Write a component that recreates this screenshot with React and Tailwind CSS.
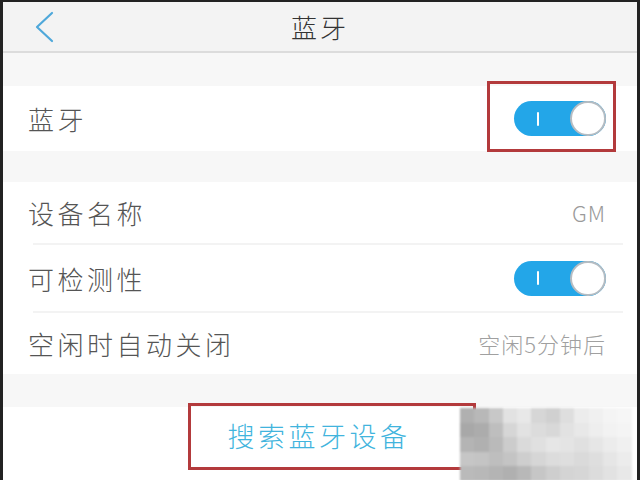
import React from 'react';

const font = { fontFamily: '"Noto Sans CJK SC", "Noto Sans", sans-serif' };

// 马赛克水印的灰度块
const mosaic = [
  [176, 184, 200, 226, 232, 214, 208, 222, 236, 240, 244, 246],
  [168, 172, 190, 214, 226, 220, 216, 226, 232, 238, 242, 244],
  [180, 176, 186, 204, 218, 224, 230, 228, 224, 230, 236, 240],
  [198, 196, 190, 196, 206, 214, 220, 222, 218, 222, 230, 236],
  [186, 184, 180, 176, 184, 198, 206, 212, 214, 220, 226, 232],
];

const Toggle = () => (
  <div className="relative w-[92px] h-[35px] rounded-full bg-[#23a6e8] flex items-center">
    <div className="ml-[23px] w-[2px] h-[14px] bg-white rounded-full" />
    <div className="absolute right-0 top-0 w-[36px] h-[35px] rounded-full bg-white border-2 border-[#b5bcc2]" />
  </div>
);

const Row = ({ label, children, className = '' }) => (
  <div className={`flex items-center justify-between pl-[25px] pr-[31px] bg-white ${className}`}>
    <span className="text-[26px] tracking-[3.5px] font-light text-[#555]">{label}</span>
    {children}
  </div>
);

export default function App() {
  return (
    <div style={font} className="w-[640px] h-[480px] overflow-hidden bg-[#f7f7f7] border-l-[3px] border-t-2 border-r-[3px] border-[#222] flex flex-col">
      {/* 标题栏 */}
      <div className="h-[51px] shrink-0 bg-[#f3f3f3] border-b-2 border-[#dcdcdc] flex items-center">
        <div className="w-[80px] pl-[30px] flex items-center">
          <svg width="22" height="32" viewBox="0 0 22 32" fill="none">
            <path d="M19 2 L4 16 L19 30" stroke="#4fa8da" strokeWidth="2.2" strokeLinecap="round" strokeLinejoin="round" />
          </svg>
        </div>
        <div className="flex-1 text-center text-[26px] tracking-[3px] font-light text-[#333]">蓝牙</div>
        <div className="w-[80px]" />
      </div>

      <div className="h-[33px] shrink-0" />

      {/* 蓝牙开关 */}
      <div className="relative">
        <Row label="蓝牙" className="h-[65px]">
          <Toggle />
        </Row>
        <div className="absolute left-[484px] top-[-5px] w-[129px] h-[71px] border-[3px] border-[#b33a3c]" />
      </div>

      <div className="h-[31px] shrink-0" />

      {/* 设备设置 */}
      <div className="bg-white flex flex-col">
        <Row label="设备名称" className="h-[61px]">
          <span className="text-[22px] tracking-[1px] font-light text-[#9a9a9a]">GM</span>
        </Row>
        <div className="ml-[30px] mr-[14px] h-[2px] bg-[#f3f3f3]" />
        <Row label="可检测性" className="h-[66px]">
          <Toggle />
        </Row>
        <div className="ml-[30px] mr-[14px] h-[2px] bg-[#f3f3f3]" />
        <Row label="空闲时自动关闭" className="h-[61px]">
          <span className="text-[22px] tracking-[1px] font-light text-[#a0a0a0]">空闲5分钟后</span>
        </Row>
      </div>

      <div className="h-[33px] shrink-0" />

      {/* 搜索按钮 */}
      <div className="relative flex-1 bg-white">
        <div className="absolute left-[185px] top-[-4px] w-[288px] h-[67px] border-[3px] border-[#b33a3c] flex items-center justify-center pr-[26px]">
          <span className="text-[27px] tracking-[3.5px] font-light text-[#41b4dd]">搜索蓝牙设备</span>
        </div>
        <div className="absolute left-[457px] top-[1px] grid grid-cols-12 blur-[1px]">
          {mosaic.flat().map((g, i) => (
            <div key={i} className="w-[14.3px] h-[14.5px]" style={{ backgroundColor: `rgb(${g},${g},${g})` }} />
          ))}
        </div>
      </div>
    </div>
  );
}
